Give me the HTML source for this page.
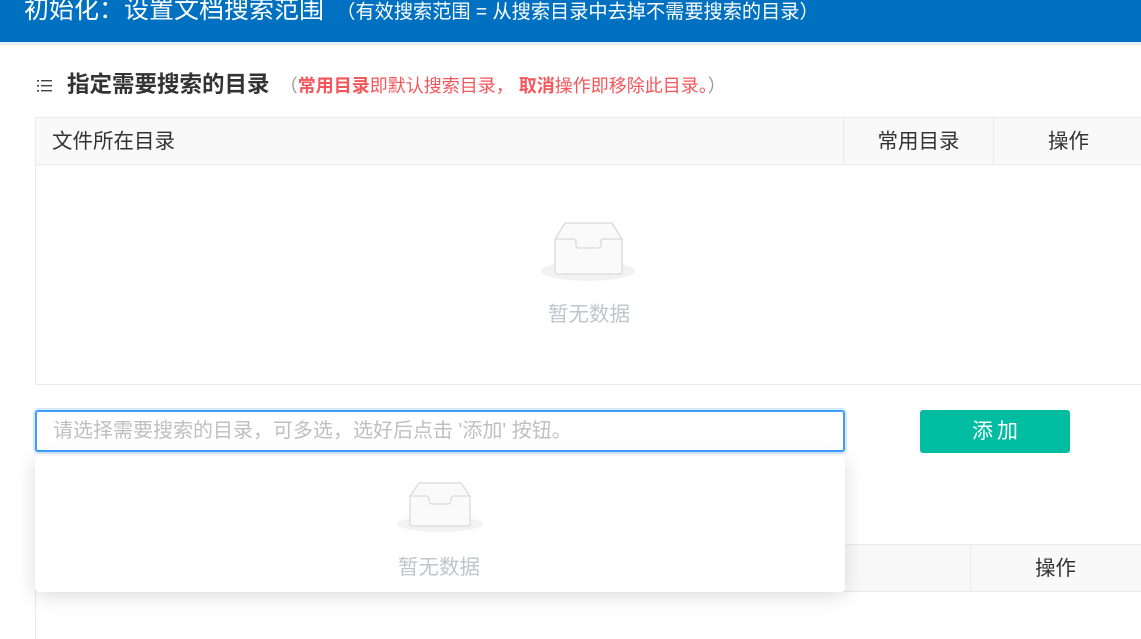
<!DOCTYPE html>
<html><head><meta charset="utf-8"><style>
*{margin:0;padding:0;box-sizing:border-box}
body{width:1141px;height:639px;overflow:hidden;background:#fff;font-family:"Liberation Sans","Noto Sans CJK SC",sans-serif;position:relative}
.a{position:absolute}
.hdr{left:0;top:0;width:1141px;height:42px;background:#0071c1}
.strip{left:0;top:42px;width:1141px;height:3px;background:#e8eef3}
.th{background:#f9f9f9;border:1px solid #ebebeb;color:#333;font-size:20.5px;line-height:48px}
.empty{color:#c0c4cc;font-size:20.5px}
.n{font-weight:normal}
</style></head><body>
<div class="a hdr"></div>
<div class="a" style="left:24px;top:-5px;color:#fff;font-size:25px;white-space:nowrap;line-height:30px">初始化：设置文档搜索范围 <span style="font-size:19.2px">&nbsp;（有效搜索范围 = 从搜索目录中去掉不需要搜索的目录）</span></div>
<div class="a strip"></div>

<div class="a" style="left:37px;top:79px;width:16px;height:14px">
<svg width="16" height="14" viewBox="0 0 16 14"><g fill="#444"><rect x="0" y="1" width="2" height="1.6"/><rect x="0" y="6" width="2" height="1.6"/><rect x="0" y="11" width="2" height="1.6"/><rect x="4" y="1" width="11" height="1.4"/><rect x="4" y="6" width="11" height="1.4"/><rect x="4" y="11" width="11" height="1.4"/></g></svg></div>
<div class="a" style="left:67px;top:70px;font-size:22.5px;font-weight:bold;color:#333;white-space:nowrap;line-height:30px">指定需要搜索的目录 <span class="n" style="font-size:18px;color:#999;margin-left:4px">（</span><span style="font-size:18px;color:#f5565b">常用目录</span><span class="n" style="font-size:18px;color:#f5565b">即默认搜索目录，</span><span style="font-size:18px;color:#f5565b"> 取消</span><span class="n" style="font-size:18px;color:#f5565b">操作即移除此目录。</span><span class="n" style="font-size:18px;color:#999">）</span></div>

<!-- table 1 -->
<div class="a" style="left:35px;top:117px;width:1120px;height:268px;border:1px solid #ebebeb"></div>
<div class="a th" style="left:35px;top:117px;width:809px;height:48px;padding-left:16px">文件所在目录</div>
<div class="a th" style="left:843px;top:117px;width:151px;height:48px;text-align:center">常用目录</div>
<div class="a th" style="left:993px;top:117px;width:160px;height:48px;padding-left:54px">操作</div>

<svg class="a" style="left:540px;top:220px" width="98" height="64" viewBox="0 0 98 64"><ellipse cx="48" cy="51" rx="47" ry="10" fill="#f2f2f2"/><path d="M15 19 L25 3 H72 L82 19 V52 a2 2 0 0 1 -2 2 H17 a2 2 0 0 1 -2 -2 Z" fill="#fafafa" stroke="#d9d9d9" stroke-width="1.3"/><path d="M15 19 H33 a3 3 0 0 1 3 3 v3 a3 3 0 0 0 3 3 H58 a3 3 0 0 0 3 -3 v-3 a3 3 0 0 1 3 -3 H82" fill="none" stroke="#d9d9d9" stroke-width="1.3"/></svg>
<div class="a empty" style="left:548px;top:297px">暂无数据</div>

<!-- input -->
<div class="a" style="left:33px;top:408px;width:814px;height:46px;border:3px solid #d6e9fb;border-radius:5px"></div>
<div class="a" style="left:35px;top:410px;width:810px;height:42px;border:2px solid #409eff;border-radius:3px;color:#bfbfbf;font-size:20px;line-height:38px;padding-left:16px;white-space:nowrap">请选择需要搜索的目录，可多选，选好后点击 '添加' 按钮。</div>
<div class="a" style="left:920px;top:410px;width:150px;height:43px;background:#00bda2;border-radius:3px;color:#fff;font-size:21px;line-height:43px;text-align:center;letter-spacing:4px;padding-left:4px">添加</div>

<!-- table 2 -->
<div class="a th" style="left:35px;top:544px;width:936px;height:48px"></div>
<div class="a th" style="left:970px;top:544px;width:180px;height:48px;padding-left:64px">操作</div>
<div class="a" style="left:35px;top:591px;width:1px;height:48px;background:#ebebeb"></div>

<!-- dropdown -->
<div class="a" style="left:35px;top:456px;width:810px;height:136px;background:#fff;border-radius:4px;box-shadow:0 4px 20px rgba(0,0,0,0.14)"></div>
<svg class="a" style="left:396px;top:480px" width="88" height="52" viewBox="0 0 88 52"><ellipse cx="44" cy="44" rx="43" ry="8" fill="#f2f2f2"/><path d="M14 16 L23 3 H65 L74 16 V44 a2 2 0 0 1 -2 2 H16 a2 2 0 0 1 -2 -2 Z" fill="#fafafa" stroke="#d9d9d9" stroke-width="1.2"/><path d="M14 16 H30 a3 3 0 0 1 3 3 v2 a3 3 0 0 0 3 3 H52 a3 3 0 0 0 3 -3 v-2 a3 3 0 0 1 3 -3 H74" fill="none" stroke="#d9d9d9" stroke-width="1.2"/></svg>
<div class="a empty" style="left:398px;top:550px">暂无数据</div>
</body></html>
